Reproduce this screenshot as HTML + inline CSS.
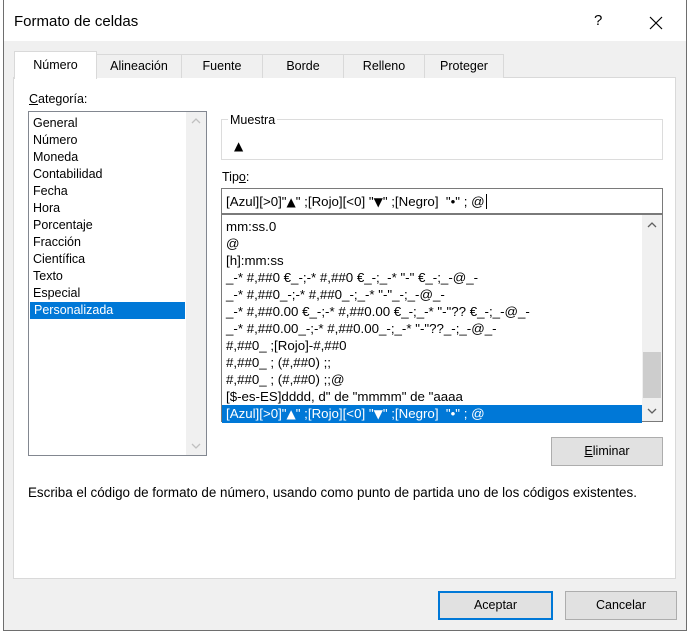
<!DOCTYPE html>
<html><head><meta charset="utf-8"><style>
*{box-sizing:border-box;margin:0;padding:0}
body{width:693px;height:637px;background:#fff;position:relative;overflow:hidden;font-family:"Liberation Sans",sans-serif;font-size:12px;color:#000}
.a{position:absolute}
.win{left:3px;top:0;width:684px;height:631px;border:1px solid #6e6e6e;border-top:none;background:#f0f0f0}
.title{left:0;top:0;width:682px;height:41px;background:#fff}
.panel{left:10px;top:77px;width:663px;height:502px;background:#fff;border:1px solid #d9d9d9}
.tab{top:54px;height:24px;border:1px solid #d9d9d9;border-bottom:none;background:#f0f0f0;text-align:center;line-height:23px;font-size:12.5px}
.list{background:#fff;border:1px solid #828790}
.row{height:17px;line-height:17px;padding-left:4px;white-space:nowrap}
.sel{background:#0078d7;color:#fff}
.sb{background:#f0f0f0}
.btn{background:#e1e1e1;border:1px solid #adadad;text-align:center;line-height:26px;font-size:12.5px}
.tri{font-family:"DejaVu Sans",sans-serif;font-size:12px}
u{text-decoration:underline}
</style></head><body>
<div class="a win"></div>
<div class="a title" style="left:4px"></div>
<div class="a" style="left:14px;top:13px;font-size:15px">Formato de celdas</div>
<div class="a" style="left:594px;top:12px;font-size:15px">?</div>
<svg class="a" style="left:649px;top:16px" width="14" height="14"><path d="M1 1L13 13M13 1L1 13" stroke="#000" stroke-width="1.2"/></svg>
<div class="a panel" style="left:13px"></div>
<div class="a tab" style="left:96px;width:86px">Alineación</div>
<div class="a tab" style="left:181px;width:82px">Fuente</div>
<div class="a tab" style="left:262px;width:82px">Borde</div>
<div class="a tab" style="left:343px;width:82px">Relleno</div>
<div class="a tab" style="left:424px;width:80px">Proteger</div>
<div class="a tab" style="left:14px;top:51px;width:83px;height:28px;background:#fff;line-height:27px">Número</div>
<div class="a" style="left:29px;top:92px;font-size:12.5px"><u>C</u>ategoría:</div>
<div class="a list" style="left:28px;top:111px;width:179px;height:345px">
<div style="padding-top:3px;font-size:12.5px">
<div class="row">General</div><div class="row">Número</div><div class="row">Moneda</div><div class="row">Contabilidad</div><div class="row">Fecha</div><div class="row">Hora</div><div class="row">Porcentaje</div><div class="row">Fracción</div><div class="row">Científica</div><div class="row">Texto</div><div class="row">Especial</div><div class="row sel" style="margin-right:21px;margin-left:1px">Personalizada</div>
</div>
<div class="a sb" style="right:0;top:0;width:20px;height:343px"></div>
<svg class="a" style="right:5px;top:6px" width="10" height="6"><path d="M1 5L5 1L9 5" fill="none" stroke="#c0c0c0" stroke-width="1.3"/></svg>
<svg class="a" style="right:5px;bottom:6px" width="10" height="6"><path d="M1 1L5 5L9 1" fill="none" stroke="#c0c0c0" stroke-width="1.3"/></svg>
</div>
<div class="a" style="left:221px;top:119px;width:442px;height:41px;border:1px solid #dcdcdc"></div>
<div class="a" style="left:228px;top:113px;background:#fff;padding:0 2px;font-size:12.5px">Muestra</div>
<div class="a tri" style="left:234px;top:139px">▲</div>
<div class="a" style="left:222px;top:170px;font-size:12.5px">Tip<u>o</u>:</div>
<div class="a" style="left:221px;top:188px;width:442px;height:26px;border:1px solid #7a7a7a;background:#fff;padding:4px 4px;white-space:nowrap;font-size:13.3px;line-height:17px">[Azul][&gt;0]"<span class="tri">▲</span>" ;[Rojo][&lt;0] "<span class="tri">▼</span>" ;[Negro]&nbsp; "•" ; @<span style="border-left:1px solid #000;margin-left:1px"></span></div>
<div class="a list" style="left:221px;top:214px;width:442px;height:208px;border-color:#7a7a7a">
<div style="padding-top:3px;font-size:13.3px">
<div class="row">mm:ss.0</div><div class="row">@</div><div class="row">[h]:mm:ss</div>
<div class="row">_-* #,##0 €_-;-* #,##0 €_-;_-* "-" €_-;_-@_-</div>
<div class="row">_-* #,##0_-;-* #,##0_-;_-* "-"_-;_-@_-</div>
<div class="row">_-* #,##0.00 €_-;-* #,##0.00 €_-;_-* "-"?? €_-;_-@_-</div>
<div class="row">_-* #,##0.00_-;-* #,##0.00_-;_-* "-"??_-;_-@_-</div>
<div class="row">#,##0_ ;[Rojo]-#,##0</div>
<div class="row">#,##0_ ; (#,##0) ;;</div>
<div class="row">#,##0_ ; (#,##0) ;;@</div>
<div class="row">[$-es-ES]dddd, d" de "mmmm" de "aaaa</div>
<div class="row sel" style="margin-right:20px;height:18px">[Azul][&gt;0]"<span class="tri">▲</span>" ;[Rojo][&lt;0] "<span class="tri">▼</span>" ;[Negro]&nbsp; "•" ; @</div>
</div>
<div class="a sb" style="right:0;top:0;width:20px;height:206px"></div>
<div class="a" style="right:1px;top:137px;width:18px;height:46px;background:#cdcdcd"></div>
<svg class="a" style="right:5px;top:7px" width="10" height="6"><path d="M1 5L5 1L9 5" fill="none" stroke="#606060" stroke-width="1.3"/></svg>
<svg class="a" style="right:5px;bottom:7px" width="10" height="6"><path d="M1 1L5 5L9 1" fill="none" stroke="#606060" stroke-width="1.3"/></svg>
</div>
<div class="a btn" style="left:551px;top:437px;width:112px;height:29px"><u>E</u>liminar</div>
<div class="a" style="left:28px;top:485px;font-size:13.4px;white-space:nowrap">Escriba el código de formato de número, usando como punto de partida uno de los códigos existentes.</div>
<div class="a btn" style="left:438px;top:591px;width:115px;height:29px;border:2px solid #0078d7;line-height:25px">Aceptar</div>
<div class="a btn" style="left:565px;top:591px;width:112px;height:29px">Cancelar</div>
</body></html>
